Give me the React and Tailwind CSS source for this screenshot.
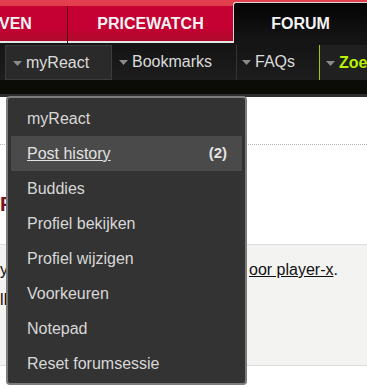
import React from 'react'

const font = { fontFamily: '"Liberation Sans", Arial, sans-serif' }

const menuItems = [
  { label: 'myReact' },
  { label: 'Post history', count: '(2)', active: true },
  { label: 'Buddies' },
  { label: 'Profiel bekijken' },
  { label: 'Profiel wijzigen' },
  { label: 'Voorkeuren' },
  { label: 'Notepad' },
  { label: 'Reset forumsessie' },
]

const Arrow = ({ className = '' }) => (
  <svg width="9" height="5" viewBox="0 0 9 5" className={className}>
    <path d="M0 0h9L4.5 5z" fill="currentColor" />
  </svg>
)

const NavItem = ({ label, className = '' }) => (
  <div className={`flex items-center shrink-0 ${className}`}>
    <Arrow className="text-[#8a8a8a] mr-[4px] mt-[2px] shrink-0" />
    <span className="text-[16px] text-[#dcdcdc] whitespace-nowrap">{label}</span>
  </div>
)

const App = () => {
  return (
    <div className="relative w-[367px] h-[388px] overflow-hidden bg-white" style={font}>
      {/* top tabs */}
      <div className="h-[43px] bg-gradient-to-b from-[#e4404f] to-[#d02a3c] flex items-end">
        <div className="h-[37px] w-[67px] shrink-0 flex items-center overflow-hidden bg-gradient-to-b from-[#c50033] from-60% to-[#b00a2c] border-b-2 border-[#e6e6e6]">
          <span className="text-[16px] font-bold text-[#f2f2f2] -ml-[1px]">VEN</span>
        </div>
        <div className="h-[37px] w-[1px] shrink-0 bg-[#5e0014]" />
        <div className="h-[37px] w-[165px] shrink-0 flex items-center justify-center bg-gradient-to-b from-[#c50033] from-60% to-[#b00a2c] border-b-2 border-[#e6e6e6]">
          <span className="text-[16px] font-bold text-[#f2f2f2]">PRICEWATCH</span>
        </div>
        <div className="h-[41px] flex-1 flex items-center justify-center bg-gradient-to-b from-[#050505] to-[#161616] border-l border-t border-[#d8d8d8] rounded-tl-[3px]">
          <span className="text-[16px] font-bold text-[#f4f4f4] mt-[2px]">FORUM</span>
        </div>
      </div>

      {/* sub navigation */}
      <div className="h-[37px] bg-gradient-to-b from-[#141414] to-[#1d1d1d] flex items-stretch overflow-hidden">
        <div className="ml-[5px] mt-[2px] w-[107px] shrink-0 bg-[#2a2a2a] border border-[#3c3c3c] flex items-center pl-[7px]">
          <Arrow className="text-[#8a8a8a] mr-[4px] mt-[2px] shrink-0" />
          <span className="text-[16px] text-[#dcdcdc]">myReact</span>
        </div>
        <NavItem label="Bookmarks" className="pl-[7px] w-[124px]" />
        <div className="w-[1px] mt-[2px] shrink-0 bg-[#333]" />
        <NavItem label="FAQs" className="pl-[5px] w-[82px]" />
        <div className="w-[1px] mt-[2px] shrink-0 bg-[#9ccc00]" />
        <div className="flex items-center pl-[6px] bg-[#202020] shrink-0 w-[80px] mt-[2px]">
          <Arrow className="text-[#8a8a8a] mr-[4px] mt-[2px] shrink-0" />
          <span className="text-[16px] font-bold text-[#b8f200] whitespace-nowrap">Zoeken</span>
        </div>
      </div>
      <div className="h-[14px] bg-[#0b0c08]" />
      <div className="h-[3px] bg-[#2e2e2e]" />

      {/* page content */}
      <div className="pt-[47px]">
        <div className="border-t border-dotted border-[#b5b5b5]" />
        <h2 className="mt-[44px] text-[20px] font-bold text-[#7a1020] whitespace-nowrap">Recente posts</h2>
        <div className="mt-[25px] h-[122px] bg-[#f3f3f1] border-t border-b border-[#dedede] pt-[13px] text-[16px] text-[#111]">
          <p className="flex whitespace-nowrap">
            <span className="w-[249px] overflow-hidden shrink-0 underline">yOverzicht van posts d</span>
            <span className="underline">oor player-x</span>
            <span>.</span>
          </p>
          <p className="mt-[6px] whitespace-nowrap">lPosts per topic.</p>
        </div>
      </div>

      {/* dropdown menu */}
      <div className="absolute left-[6px] top-[96px] w-[241px] bg-[#333333] border-2 border-[#7c7c7c] rounded-[4px] px-[3px] pt-[3px] pb-[2px]">
        {menuItems.map((item) => (
          <div
            key={item.label}
            className={`h-[35px] flex items-center justify-between pl-[16px] pr-[15px] text-[16px] ${
              item.active ? 'bg-[#4a4a4a] text-[#e2e2e2]' : 'text-[#d8d8d8]'
            }`}
          >
            <span className={item.active ? 'underline' : ''}>{item.label}</span>
            {item.count && <span className="font-bold text-[15px]">{item.count}</span>}
          </div>
        ))}
      </div>
    </div>
  )
}

export default App
